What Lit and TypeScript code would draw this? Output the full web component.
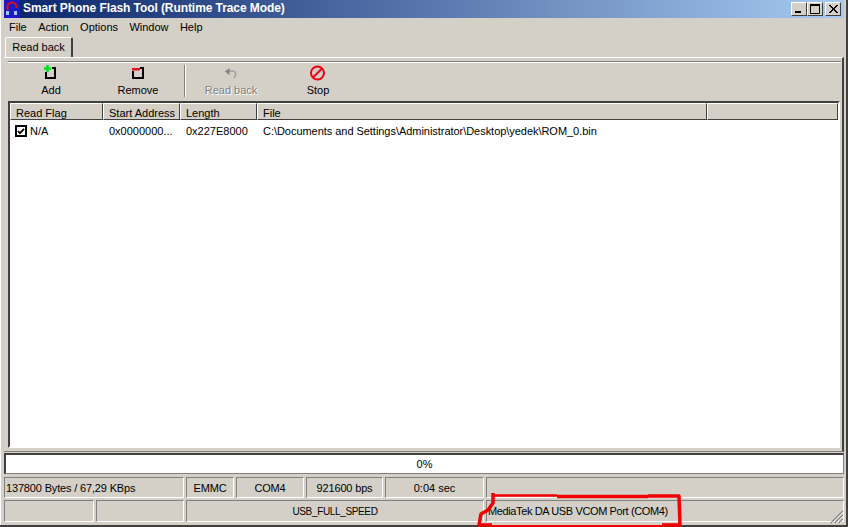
import { LitElement, html, css } from "lit";
import { customElement } from "lit/decorators.js";

@customElement("app-root")
export class AppRoot extends LitElement {
  static styles = css`
    :host { display: block; width: 848px; height: 527px; position: relative; overflow: hidden; background: #d4d0c8; font: 11px "Liberation Sans", Tahoma, sans-serif; color: #000; }
    .win { width: 848px; height: 527px; box-sizing: border-box; display: flex; flex-direction: column; padding: 0 2px 0 4px; border-right: 2px solid #404040; border-bottom: 2px solid #404040; box-shadow: inset 1px 0 0 #fff; }
    .title { height: 18px; flex: none; display: flex; align-items: center; background: linear-gradient(90deg, #0a246a, #a6caf0); color: #fff; font: bold 12px "Liberation Sans", sans-serif; letter-spacing: -0.08px; }
    .title svg { flex: none; margin: 0 3px 0 0; }
    .title .t { flex: 1; white-space: nowrap; padding-bottom: 2px; }
    .cap { display: flex; margin-right: 3px; }
    .cb { width: 16px; height: 14px; box-sizing: border-box; background: #d4d0c8; border: 1px solid; border-color: #fff #404040 #404040 #fff; display: block; }
    .cb.close { margin-left: 2px; }
    .menu { height: 19px; flex: none; display: flex; align-items: center; padding: 0 0 2px 5px; box-sizing: border-box; gap: 11.4px; }
    .tabs { height: 20px; flex: none; display: flex; padding-left: 1px; }
    .tab { width: 68px; height: 20px; box-sizing: border-box; border: 1px solid; border-color: #fff #404040 transparent #fff; border-width: 1px 2px 0 1px; border-radius: 2px 2px 0 0; display: flex; align-items: center; justify-content: center; padding-bottom: 2px; }
    .panel { height: 395px; flex: none; box-sizing: border-box; display: flex; flex-direction: column; border-top: 1px solid #fff; border-right: 2px solid #404040; border-bottom: 1px solid #808080; padding: 3px 1px 0 4px; }
    .toolbar { height: 40px; flex: none; display: flex; border-top: 1px solid #808080; box-shadow: inset 0 1px 0 #fff; box-sizing: border-box; padding: 3px 0 0 0; }
    .btn { width: 87px; box-sizing: border-box; padding-right: 1px; display: flex; flex-direction: column; align-items: center; }
    .btn svg { display: block; }
    .btn span { margin-top: 2px; line-height: 14px; }
    .btn.off span { color: #808080; text-shadow: 1px 1px 0 #fff; }
    .sep { width: 2px; height: 32px; margin: 0 2px; background: #808080; border-right: 1px solid #fff; box-sizing: border-box; flex: none; }
    .list { height: 347px; flex: none; margin-right: 1px; box-sizing: border-box; border: 2px solid; border-color: #404040 #fff #fff #404040; background: #fff; display: flex; flex-direction: column; }
    .head { height: 17px; flex: none; display: flex; background: #d4d0c8; }
    .hc { box-sizing: border-box; border: 1px solid; border-color: #fff #404040 #404040 #fff; padding: 2px 0 0 5px; line-height: 14px; white-space: nowrap; flex: none; }
    .row { display: flex; height: 21px; align-items: center; }
    .rc { box-sizing: border-box; flex: none; padding-left: 6px; white-space: nowrap; }
    .file { letter-spacing: -0.04px; }
    .flag { display: flex; align-items: center; gap: 3px; padding-left: 5px; }
    .chk { display: block; flex: none; }
    .progress { height: 21px; flex: none; margin: 1px 0 3px; background: #fff; box-sizing: border-box; border: 2px solid; border-color: #404040 #d4d0c8 #d4d0c8 #404040; border-bottom: 1px solid #808080; border-right: 1px solid #808080; display: flex; align-items: center; justify-content: center; }
    .status { flex: none; display: flex; gap: 2px; margin-bottom: 2px; }
    .sc { height: 21px; box-sizing: border-box; border: 1px solid; border-color: #808080 #fff #fff #808080; display: flex; align-items: center; justify-content: center; flex: none; white-space: nowrap; }
    .sc.tall { height: 22px; }
    .sc.left { justify-content: flex-start; padding-left: 1px; }
    .tight { letter-spacing: -0.16px; }
    .tighter { letter-spacing: -0.38px; }
    .caps { font-size: 10px; letter-spacing: -0.35px; }
    .grow { flex: 1; }
    .mark { position: absolute; left: 0; top: 0; pointer-events: none; }
  `;

  render() {
    const cols: [string, number][] = [["Read Flag", 93], ["Start Address", 77], ["Length", 77], ["File", 450], ["", 131]];
    return html`
      <div class="win">
        <div class="title">
          <svg width="16" height="18" viewBox="0 0 16 18">
            <rect width="16" height="18" fill="#1a1ac8"/>
            <path d="M3.500 10V7A4.500 4.500 0 0 1 12.500 7V8" fill="none" stroke="#e01010" stroke-width="2"/>
            <rect x="2" y="11" width="3" height="4" fill="#a0c8f0"/>
            <rect x="10" y="11" width="3" height="4" fill="#a0c8f0"/>
          </svg>
          <span class="t">Smart Phone Flash Tool (Runtime Trace Mode)</span>
          <div class="cap">
            <span class="cb"><svg width="14" height="12"><rect x="3" y="8" width="6" height="2"/></svg></span>
            <span class="cb"><svg width="14" height="12"><path d="M2.500 1.500h9v9h-9z" fill="none" stroke="#000"/><rect x="2" y="1" width="10" height="2"/></svg></span>
            <span class="cb close"><svg width="14" height="12"><path d="M3 2l8 8M4 2l8 8M11 2l-8 8M12 2l-8 8" stroke="#000" fill="none"/></svg></span>
          </div>
        </div>
        <div class="menu"><span>File</span><span>Action</span><span>Options</span><span>Window</span><span>Help</span></div>
        <div class="tabs"><div class="tab">Read back</div></div>
        <div class="panel">
          <div class="toolbar">
            <div class="btn">
              <svg width="16" height="16" viewBox="0 0 16 16">
                <path d="M9 3H12V13H3V7" fill="none" stroke="#000" stroke-width="2"/>
                <path d="M1 3.500H8M4.500 0V7" stroke="#00e020" stroke-width="2.500"/>
              </svg>
              <span>Add</span>
            </div>
            <div class="btn">
              <svg width="16" height="16" viewBox="0 0 16 16">
                <path d="M10 3H13V13H3V6" fill="none" stroke="#000" stroke-width="2"/>
                <rect x="2" y="3" width="8" height="2.500" fill="#e81020"/>
              </svg>
              <span>Remove</span>
            </div>
            <div class="sep"></div>
            <div class="btn off">
              <svg width="16" height="16" viewBox="0 0 16 16">
                <path d="M5 6H10.500A3.500 3.500 0 0 1 10.500 12.500" fill="none" stroke="#a0a0a0" stroke-width="1.500"/>
                <path d="M2 6.500L6.500 3V10Z" fill="#808080"/>
              </svg>
              <span>Read back</span>
            </div>
            <div class="btn">
              <svg width="16" height="16" viewBox="0 0 16 16">
                <circle cx="7.500" cy="8" r="6.500" fill="none" stroke="#f00010" stroke-width="2"/>
                <path d="M3 12.500L12 3.500" stroke="#f00010" stroke-width="2"/>
              </svg>
              <span>Stop</span>
            </div>
          </div>
          <div class="list">
            <div class="head">${cols.map(([n, w]) => html`<div class="hc" style="width:${w}px">${n}</div>`)}</div>
            <div class="row">
              <div class="rc flag" style="width:93px">
                <svg class="chk" width="12" height="12" viewBox="0 0 12 12">
                  <rect x="1" y="1" width="10" height="10" fill="#fff" stroke="#000" stroke-width="2"/>
                  <path d="M3 6l2 2.200L9 3.800" fill="none" stroke="#000" stroke-width="1.800"/>
                </svg>
                <span>N/A</span>
              </div>
              <div class="rc" style="width:77px">0x0000000...</div>
              <div class="rc" style="width:77px">0x227E8000</div>
              <div class="rc file">C:\\Documents and Settings\\Administrator\\Desktop\\yedek\\ROM_0.bin</div>
            </div>
          </div>
        </div>
        <div class="progress">0%</div>
        <div class="status">
          <div class="sc left tight" style="width:180px">137800 Bytes / 67,29 KBps</div>
          <div class="sc tight" style="width:48px">EMMC</div>
          <div class="sc tight" style="width:68px">COM4</div>
          <div class="sc tight" style="width:77px">921600 bps</div>
          <div class="sc" style="width:99px">0:04 sec</div>
          <div class="sc grow"></div>
        </div>
        <div class="status">
          <div class="sc tall" style="width:90px"></div>
          <div class="sc tall" style="width:88px"></div>
          <div class="sc tall caps" style="width:298px">USB_FULL_SPEED</div>
          <div class="sc tall left grow tighter">MediaTek DA USB VCOM Port (COM4)</div>
        </div>
      </div>
      <svg class="mark" width="848" height="527" viewBox="0 0 848 527">
        <path d="M831 523L843 511M835 523L843 515M839 523L843 519" stroke="#808080" stroke-width="1.500" fill="none"/>
        <path d="M832 523L844 511M836 523L844 515M840 523L844 519" stroke="#fff" stroke-width="0.700" fill="none"/>
        <g fill="none" stroke="#f00000" stroke-linejoin="round">
          <path d="M493 493V503L488 510L481 514L479 525H492" stroke-width="3.500"/>
          <path d="M492 526H662" stroke-width="2"/>
          <path d="M662 525H680L679 496H648" stroke-width="3.500"/>
          <path d="M648 496.500H557" stroke-width="3.500"/>
          <path d="M557 495.500H493" stroke-width="2.500"/>
        </g>
      </svg>
    `;
  }
}
